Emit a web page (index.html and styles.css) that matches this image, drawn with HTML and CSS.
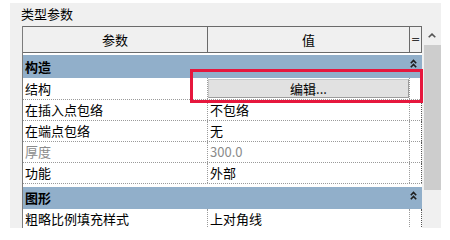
FILE: index.html
```html
<!DOCTYPE html>
<html lang="zh">
<head>
<meta charset="utf-8">
<title>类型参数</title>
<link rel="stylesheet" href="styles.css">
</head>
<body>
<div class="panel">
  <div class="title">类型参数</div>
  <div class="main">
    <div class="grid">
      <div class="head">
        <div class="hc c1">参数</div>
        <div class="hc c2">值</div>
        <div class="hc c3">=</div>
      </div>
      <div class="body">
        <div class="cat first">
          <span>构造</span>
          <svg class="chev" width="7" height="9" viewBox="0 0 7 9"><polyline points="0.8,4.2 3.5,1.5 6.2,4.2"/><polyline points="0.8,8.2 3.5,5.5 6.2,8.2"/></svg>
        </div>
        <div class="row tall">
          <div class="cell c1">结构</div>
          <div class="cell c2 btncell"><div class="btn">编辑...</div></div>
          <div class="cell c3"></div>
        </div>
        <div class="row">
          <div class="cell c1">在插入点包络</div>
          <div class="cell c2">不包络</div>
          <div class="cell c3"></div>
        </div>
        <div class="row">
          <div class="cell c1">在端点包络</div>
          <div class="cell c2">无</div>
          <div class="cell c3"></div>
        </div>
        <div class="row dim">
          <div class="cell c1">厚度</div>
          <div class="cell c2">300.0</div>
          <div class="cell c3"></div>
        </div>
        <div class="row">
          <div class="cell c1">功能</div>
          <div class="cell c2">外部</div>
          <div class="cell c3"></div>
        </div>
        <div class="cat second">
          <span>图形</span>
          <svg class="chev" width="7" height="9" viewBox="0 0 7 9"><polyline points="0.8,4.2 3.5,1.5 6.2,4.2"/><polyline points="0.8,8.2 3.5,5.5 6.2,8.2"/></svg>
        </div>
        <div class="row">
          <div class="cell c1">粗略比例填充样式</div>
          <div class="cell c2">上对角线</div>
          <div class="cell c3"></div>
        </div>
      </div>
    </div>
    <div class="scroll">
      <div class="sbtn"><svg width="8" height="5" viewBox="0 0 8 5"><polyline points="0.7,4.3 4,1.1 7.3,4.3"/></svg></div>
      <div class="thumb"></div>
    </div>
  </div>
  <div class="mark"></div>
</div>
</body>
</html>
```

FILE: styles.css
```css
html, body {
  margin: 0;
  background: #ffffff;
}
body {
  font-family: "Noto Sans CJK SC", "Microsoft YaHei", sans-serif;
  font-size: 13px;
  color: #000;
}
.panel {
  position: relative;
  margin: 3px 0 0 10px;
  width: 431px;
  height: 225px;
  background: #f0f0f0;
  overflow: hidden;
}
.title {
  height: 23px;
  line-height: 21px;
  padding-left: 11px;
}
.main {
  display: flex;
  gap: 1px;
  padding-left: 12px;
}
.grid {
  width: 400px;
  box-sizing: border-box;
  background: #fff;
  border-left: 1px solid #7c7c7c;
  height: 202px;
}
.head {
  display: flex;
  height: 27px;
  box-sizing: border-box;
  border-top: 1px solid #6a6a6a;
  border-bottom: 1px solid #6a6a6a;
  background: #f0f0f0;
}
.hc {
  box-sizing: border-box;
  border-right: 1px solid #6a6a6a;
  display: flex;
  align-items: center;
  justify-content: center;
  line-height: 16px;
}
.hc.c3 {
  font-family: "DejaVu Sans", sans-serif;
  font-size: 11px;
  color: #333;
}
.c1 { width: 185px; }
.c2 { width: 202px; }
.c3 { width: 12px; }
.body {
  padding-top: 2px;
}
.cat {
  height: 23px;
  background: #91afca;
  display: flex;
  align-items: center;
  justify-content: space-between;
  padding: 0 5px 0 2px;
  font-weight: bold;
  line-height: 16px;
}
.cat.second {
  margin-top: 3px;
  height: 22px;
}
.chev {
  align-self: flex-start;
  margin-top: 4px;
  fill: none;
  stroke: #1e1e1e;
  stroke-width: 1.6;
}
.row {
  display: flex;
  height: 21px;
  box-sizing: border-box;
  border-bottom: 1px dotted #9a9a9a;
}
.row.tall {
  height: 22px;
}
.cell {
  box-sizing: border-box;
  border-right: 1px dotted #9a9a9a;
  display: flex;
  align-items: center;
  padding-left: 2px;
  line-height: 16px;
  white-space: nowrap;
}
.cell.c3 {
  border-right: 1px dotted #555;
  padding: 0;
}
.row.dim .cell {
  color: #8a8a8a;
}
.btncell {
  padding: 0;
  align-items: flex-start;
}
.btn {
  margin-top: 1px;
  width: 201px;
  height: 19px;
  box-sizing: border-box;
  background: #e1e1e1;
  border: 1px solid;
  border-color: #c8c8c8 #9c9c9c #9c9c9c #c8c8c8;
  display: flex;
  align-items: center;
  justify-content: center;
  line-height: 16px;
}
.scroll {
  width: 18px;
  height: 202px;
  background: #f0f0f0;
  display: flex;
  flex-direction: column;
}
.sbtn {
  height: 19px;
  display: flex;
  align-items: center;
  justify-content: center;
}
.sbtn svg {
  fill: none;
  stroke: #555;
  stroke-width: 1.6;
}
.thumb {
  margin-left: 1px;
  width: 17px;
  height: 145px;
  background: #cdcdcd;
}
.mark {
  position: absolute;
  left: 180px;
  top: 66px;
  width: 233px;
  height: 34px;
  box-sizing: border-box;
  border: 3px solid #e6173d;
}
```
